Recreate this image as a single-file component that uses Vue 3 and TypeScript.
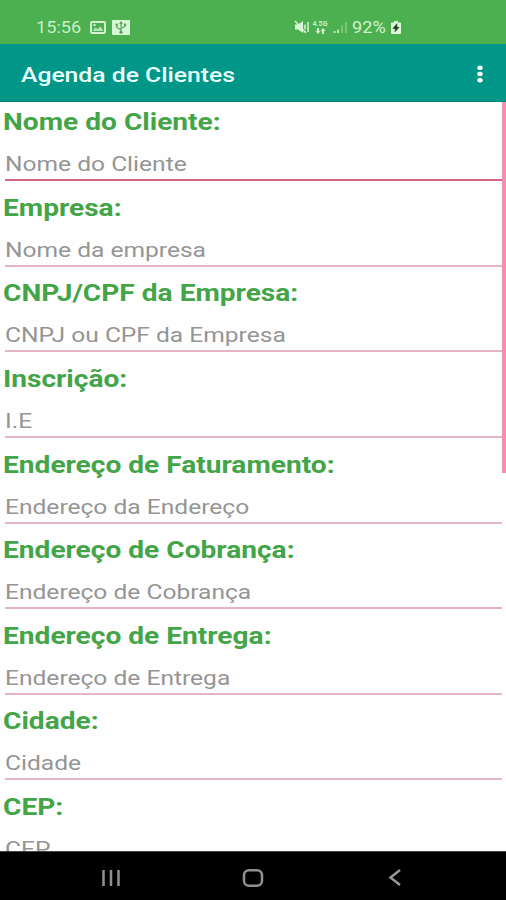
<script setup lang="ts">
interface Field {
  label: string
  hint: string
  focused?: boolean
}

const fields: Field[] = [
  { label: 'Nome do Cliente:', hint: 'Nome do Cliente', focused: true },
  { label: 'Empresa:', hint: 'Nome da empresa' },
  { label: 'CNPJ/CPF da Empresa:', hint: 'CNPJ ou CPF da Empresa' },
  { label: 'Inscrição:', hint: 'I.E' },
  { label: 'Endereço de Faturamento:', hint: 'Endereço da Endereço' },
  { label: 'Endereço de Cobrança:', hint: 'Endereço de Cobrança' },
  { label: 'Endereço de Entrega:', hint: 'Endereço de Entrega' },
  { label: 'Cidade:', hint: 'Cidade' },
  { label: 'CEP:', hint: 'CEP' },
]
</script>

<template>
  <div class="screen">
    <header class="status">
      <div class="status-left">
        <span class="clock"><span class="wide">15:56</span></span>
        <svg class="picture" width="16" height="13" viewBox="0 0 16 13">
          <rect x="1" y="1" width="14" height="11" rx="1" fill="none" stroke="#d3f3d0" stroke-width="1.9" />
          <path d="M2.5 10 5.5 6.500 7.500 8 10.500 5.500 13.500 10z" fill="#b5e3b2" />
          <circle cx="4.500" cy="4" r="1.200" fill="#d3f3d0" />
        </svg>
        <svg class="usb" width="18" height="15" viewBox="0 0 18 15">
          <rect width="18" height="15" rx="1" fill="#d8f5d5" />
          <path d="M9 2.500V12M9 10 4.800 7.500V5M9 8.500l4-2V4.500" fill="none" stroke="#5ba55b" stroke-width="1.200" />
          <path d="M7 4 9 1l2 3z" fill="#5ba55b" />
          <circle cx="9" cy="12.200" r="1.500" fill="#4f9c50" />
          <circle cx="4.800" cy="4.800" r="1.300" fill="#5ba55b" />
          <rect x="11.900" y="3.600" width="2.300" height="2.200" fill="#5ba55b" />
        </svg>
      </div>
      <div class="status-right">
        <svg width="16" height="14" viewBox="0 0 16 14">
          <path d="M1 4.500h3L9 1v12L4 9.500H1z" fill="#d8f5d5" />
          <path d="M1 1l11 12" stroke="#d8f5d5" stroke-width="1.500" />
          <path d="M11 4.500v5M14 2v10" fill="none" stroke="#d8f5d5" stroke-width="1.500" />
        </svg>
        <span class="network">
          <span class="generation">4.5G</span>
          <svg width="11" height="6" viewBox="0 0 11 6">
            <path d="M2 0h2v3h1.500L3 6 .5 3H2zM7 6h2V3h1.500L8 0 5.500 3H7z" fill="#d8f5d5" />
          </svg>
        </span>
        <svg class="signal" width="15" height="13" viewBox="0 0 15 13">
          <path d="M1.500 12v-2M5 12V8.500" stroke="#b9e8b5" stroke-width="2" />
          <path d="M9 12V4.500M13 12V1" stroke="#85cc83" stroke-width="1.700" />
        </svg>
        <span class="percent"><span class="wide">92%</span></span>
        <svg class="battery" width="10" height="13" viewBox="0 0 10 14" preserveAspectRatio="none">
          <path d="M3 0h4v1.500h2q1 0 1 1V13q0 1-1 1H1q-1 0-1-1V2.500q0-1 1-1h2z" fill="#dcf7d9" />
          <path d="M6 3 2 8h2.500L4 11.500 8 6.700H5.500z" fill="#17381b" stroke="#17381b" stroke-width=".7" />
        </svg>
      </div>
    </header>

    <div class="toolbar">
      <h1 class="title"><span class="wide">Agenda de Clientes</span></h1>
      <svg class="menu" width="8" height="20" viewBox="0 0 8 20">
        <ellipse cx="4" cy="3.700" rx="2.700" ry="2.200" fill="#fff" />
        <ellipse cx="4" cy="10" rx="2.700" ry="2.200" fill="#fff" />
        <ellipse cx="4" cy="16.300" rx="2.700" ry="2.200" fill="#fff" />
      </svg>
    </div>

    <main class="content">
      <form class="form">
        <div v-for="field in fields" :key="field.label" class="field" :class="{ focused: field.focused }">
          <label class="label"><span class="wide">{{ field.label }}</span></label>
          <div class="input"><span class="wide">{{ field.hint }}</span></div>
        </div>
      </form>
      <div class="scrollbar"></div>
    </main>

    <nav class="navbar">
      <svg width="22" height="20" viewBox="0 0 22 20">
        <path d="M3.500 2v16M11 2v16M18.500 2v16" stroke="#909090" stroke-width="2.500" />
      </svg>
      <svg width="22" height="20" viewBox="0 0 22 20">
        <rect x="2" y="2.200" width="18" height="15.600" rx="5" fill="none" stroke="#909090" stroke-width="2.500" />
      </svg>
      <svg width="22" height="20" viewBox="0 0 22 20">
        <path d="M16 2 6.500 9.500 16 17" fill="none" stroke="#989898" stroke-width="2.400" />
      </svg>
    </nav>
  </div>
</template>

<style>
body {
  margin: 0;
  background: #fff;
}
</style>

<style scoped>
.screen {
  display: flex;
  flex-direction: column;
  width: 506px;
  height: 900px;
  overflow: hidden;
  font-family: Roboto, 'Liberation Sans', sans-serif;
  background: #fefefe;
}

.wide {
  display: inline-block;
  white-space: nowrap;
  transform: scaleX(1.1);
  transform-origin: left center;
}

.status {
  display: flex;
  flex: 0 0 44px;
  align-items: center;
  box-sizing: border-box;
  padding: 10px 0 0 36px;
  background: #4caf50;
  color: #c9efc6;
  font-size: 16.500px;
  line-height: 20px;
}

.status-left,
.status-right {
  display: flex;
  align-items: center;
}

.status-left {
  width: 258px;
}

.clock {
  width: 53.500px;
  padding-top: 1px;
}

.usb {
  margin-left: 6px;
}

.network {
  display: flex;
  flex-direction: column;
  align-items: center;
  width: 16px;
  margin-left: 2px;
}

.generation {
  font-size: 7px;
  font-weight: 700;
  line-height: 7px;
}

.signal {
  margin-left: 5px;
}

.percent {
  width: 34px;
  margin-left: 4px;
  margin-right: 5px;
  padding-top: 1px;
  color: #d0f2cd;
}

.toolbar {
  display: flex;
  flex: 0 0 58px;
  align-items: center;
  justify-content: space-between;
  box-sizing: border-box;
  padding: 2px 22px 0 21px;
  border-bottom: 1px solid #078476;
  background: #009688;
}

.title {
  margin: 2px 0 0;
  color: #e9fffc;
  font-size: 20.500px;
  font-weight: 500;
  line-height: 26px;
}

.title .wide {
  transform: scaleX(1.205);
}

.content {
  display: flex;
  flex: 0 0 749px;
  overflow: hidden;
}

.form {
  flex: 1;
}

.field {
  height: 85.650px;
}

.label {
  display: block;
  box-sizing: border-box;
  height: 39px;
  padding: 1px 0 0 3px;
  color: #43a548;
  font-size: 23px;
  font-weight: 700;
  line-height: 40px;
}

.label .wide {
  transform: scaleX(1.222);
}

.input {
  box-sizing: border-box;
  height: 40px;
  margin: 0 0 0 5px;
  padding-top: 7px;
  border-bottom: 2px solid #e5b5c2;
  color: #959595;
  font-size: 20.500px;
  line-height: 32px;
}

.input .wide {
  transform: scaleX(1.198);
}

.focused .input {
  border-color: #d4647f;
}

.scrollbar {
  flex: 0 0 4px;
  height: 371px;
  background: #f48fb1;
}

.navbar {
  display: flex;
  flex: 1;
  align-items: center;
  justify-content: space-between;
  padding: 3px 100px 0;
  border-top: 1px solid #444;
  background: #000;
}
</style>
